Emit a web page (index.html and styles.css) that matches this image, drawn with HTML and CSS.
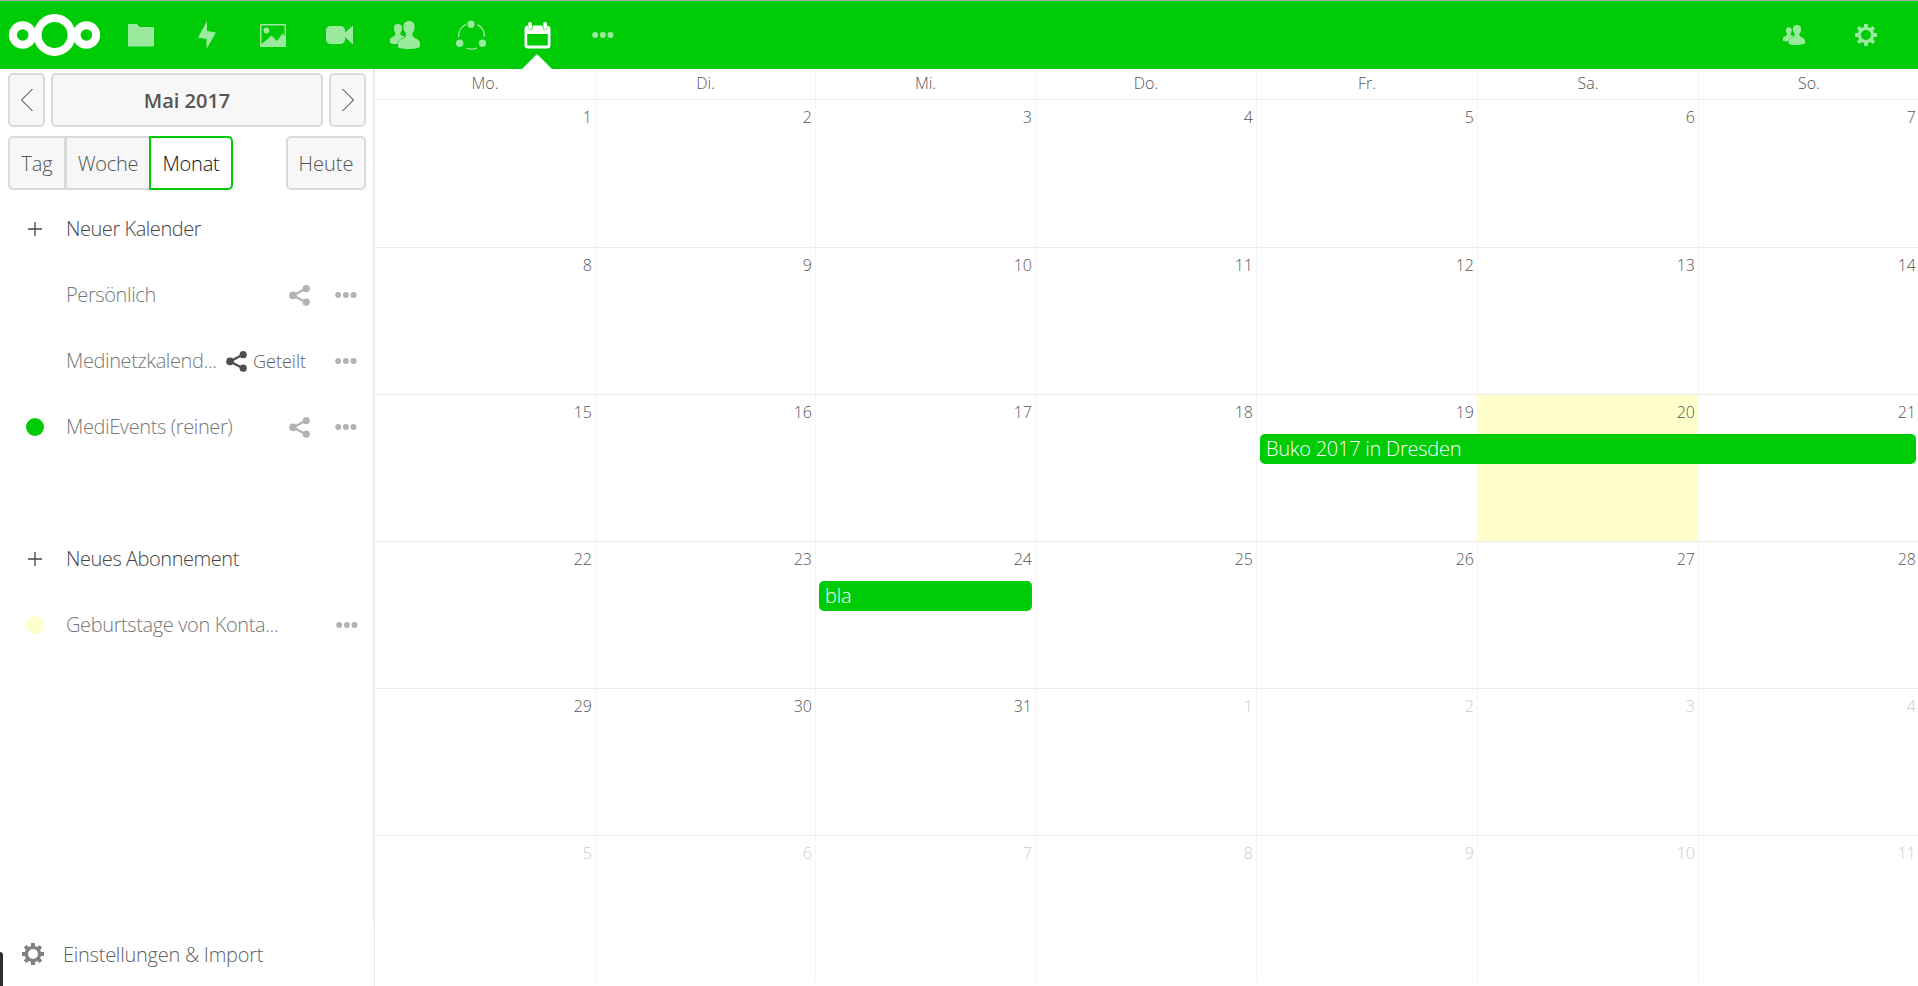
FILE: index.html
```html
<!DOCTYPE html>
<html lang="de">
<head>
<meta charset="utf-8">
<title>Kalender</title>
<link rel="stylesheet" href="styles.css">
</head>
<body>
<svg class="defs" width="0" height="0" aria-hidden="true">
  <symbol id="i-people" viewBox="0 0 30 28">
    <path d="M7.7 3C5 3 3.7 5 3.8 7.500C3.900 9.500 4.600 10.800 5.300 11.700V14C4.500 15.500 0 16 0 19V22C2 23 5 23 7.500 23C7.500 18 13 17.500 14.500 16L14.500 15C12 14.500 10.700 14.500 10.500 13.500V11.500C11.500 10.500 12 8.500 12 7C12 4.500 10.500 3 7.700 3Z"/>
    <path d="M19.200 0C15.500 0 13.200 2.300 13.300 6C13.400 9 14.500 10.800 15.800 12V15.500C14.500 18.500 8 17 8 23V26.500C13 28.600 25 28.600 30 26V22C29.500 17.800 24 17.500 22.500 15V12C23.800 10.800 24.700 8.500 24.700 5.800C24.700 2 22.500 0 19.200 0Z"/>
  </symbol>
  <symbol id="i-gear" viewBox="0 0 22 22">
    <path fill-rule="evenodd" d="M9 0H13V3L15.300 4L17.500 1.900L20.200 4.600L18.100 6.700L19 9H22V13H19L18.100 15.300L20.200 17.400L17.500 20.100L15.300 18.100L13 19V22H9V19L6.700 18.100L4.500 20.100L1.800 17.400L3.900 15.300L3 13H0V9H3L3.900 6.700L1.800 4.600L4.500 1.900L6.700 4L9 3ZM11 6A5 5 0 1 0 11 16A5 5 0 1 0 11 6Z"/>
  </symbol>
  <symbol id="i-dots" viewBox="0 0 22 6">
    <circle cx="3.200" cy="3" r="3"/><circle cx="10.900" cy="3" r="3"/><circle cx="18.500" cy="3" r="3"/>
  </symbol>
  <symbol id="i-share" viewBox="0 0 21 21">
    <path d="M17 3.500L4 10.400L17 17.300" fill="none" stroke="currentColor" stroke-width="2.300"/>
    <circle cx="17.200" cy="3.700" r="3.600"/><circle cx="4" cy="10.400" r="3.800"/><circle cx="17.200" cy="17.200" r="3.600"/>
  </symbol>
  <symbol id="i-plus" viewBox="0 0 14 14">
    <path d="M7 0V14M0 7H14" fill="none" stroke="currentColor" stroke-width="1.300"/>
  </symbol>
</svg>

<header class="topbar">
  <svg class="logo" width="92" height="44" viewBox="0 0 92 44">
    <circle cx="46.600" cy="22" r="17"/>
    <circle cx="14.700" cy="22" r="9.800"/>
    <circle cx="78.400" cy="22" r="9.800"/>
  </svg>
  <nav class="apps">
    <a class="app"><svg width="26" height="24" viewBox="0 0 26 24"><path d="M1 1H9L11.500 4H25Q26 4 26 5V22Q26 23.500 24.500 23.500H1.500Q0 23.500 0 22V2Q0 1 1 1Z"/></svg></a>
    <a class="app"><svg width="20" height="28" viewBox="0 0 20 28"><path d="M10 0L1 16.500L9.500 18V28L19 11.500L10 10Z"/></svg></a>
    <a class="app"><svg width="26" height="23" viewBox="0 0 26 23"><path fill-rule="evenodd" d="M0.500 0H25.500L26 0.500V22.500L25.500 23H0.500L0 22.500V0.500ZM1.500 1.500V20L7 15.500L11.500 11.500L17 17L22.500 9.500L24.500 12V1.500Z"/><circle cx="6.400" cy="6.500" r="2.900"/></svg></a>
    <a class="app"><svg width="27" height="20" viewBox="0 0 27 20"><rect x="0" y="1" width="19" height="18" rx="4.500"/><path d="M27 0.500V19.500L19 12V7.500Z"/></svg></a>
    <a class="app"><svg width="30" height="28"><use href="#i-people"/></svg></a>
    <a class="app"><svg width="31" height="31" viewBox="0 0 31 31"><g fill="none" stroke="currentColor" stroke-width="1.300"><path d="M2.600 17A13 13 0 0 1 10 4.300"/><path d="M21.500 4.600A13 13 0 0 1 28.400 17"/><path d="M21 28A14 14 0 0 1 10 28"/></g><circle cx="15" cy="4.300" r="3.700"/><circle cx="3.700" cy="23.200" r="3.700"/><circle cx="26.500" cy="23.200" r="3.700"/></svg></a>
    <a class="app active"><svg width="27" height="28" viewBox="0 0 27 28"><path fill-rule="evenodd" d="M3.500 4.500H4V6.500Q4.200 9 6.300 9Q8.500 9 8.700 6.500V4.500H18.500V6.500Q18.700 9 21 9Q23.200 9 23.300 6.500V4.500Q26.500 5 26.500 8V24Q26.500 27.500 23 27.500H4Q0.500 27.500 0.500 24V8Q0.500 5 3.500 4.500ZM3.200 13V24.500H23.800V13Z"/><rect x="4.300" y="1" width="3.600" height="7.500" rx="1.600"/><rect x="19.300" y="1" width="3.600" height="7.500" rx="1.600"/></svg></a>
    <a class="app"><svg width="22" height="6"><use href="#i-dots"/></svg></a>
  </nav>
  <div class="tools">
    <a><svg width="22" height="20" viewBox="0 0 30 28" preserveAspectRatio="none"><use href="#i-people"/></svg></a>
    <a><svg width="22" height="22"><use href="#i-gear"/></svg></a>
  </div>
</header>

<div class="content">
  <aside class="sidebar">
    <div class="pager">
      <button class="btn step"><svg width="14" height="24" viewBox="0 0 14 24"><path d="M12.500 1L1.500 12L12.500 23"/></svg></button>
      <button class="btn month">Mai 2017</button>
      <button class="btn step"><svg width="14" height="24" viewBox="0 0 14 24"><path d="M1.500 1L12.500 12L1.500 23"/></svg></button>
    </div>
    <div class="views">
      <button class="btn tag">Tag</button><button class="btn woche">Woche</button><button class="btn monat">Monat</button>
      <button class="btn heute">Heute</button>
    </div>
    <ul class="list">
      <li class="strong"><span class="mark"><svg width="14" height="14"><use href="#i-plus"/></svg></span><span>Neuer Kalender</span></li>
      <li><span class="mark"></span><span class="name">Persönlich</span><svg class="share" width="21" height="21"><use href="#i-share"/></svg><svg class="more" width="22" height="6"><use href="#i-dots"/></svg></li>
      <li><span class="mark"></span><span class="name">Medinetzkalend...</span><span class="shared"><svg width="21" height="21"><use href="#i-share"/></svg>Geteilt</span><svg class="more" width="22" height="6"><use href="#i-dots"/></svg></li>
      <li><span class="mark"><i class="dot green"></i></span><span class="name">MediEvents (reiner)</span><svg class="share" width="21" height="21"><use href="#i-share"/></svg><svg class="more" width="22" height="6"><use href="#i-dots"/></svg></li>
      <li></li>
      <li class="strong"><span class="mark"><svg width="14" height="14"><use href="#i-plus"/></svg></span><span>Neues Abonnement</span></li>
      <li class="sub"><span class="mark"><i class="dot yellow"></i></span><span class="name">Geburtstage von Konta...</span><svg class="more" width="22" height="6"><use href="#i-dots"/></svg></li>
    </ul>
    <div class="settings"><svg width="22" height="22"><use href="#i-gear"/></svg><span>Einstellungen &amp; Import</span></div>
  </aside>

  <main class="calendar">
    <div class="days"><div>Mo.</div><div>Di.</div><div>Mi.</div><div>Do.</div><div>Fr.</div><div>Sa.</div><div>So.</div></div>
    <div class="week first"><div>1</div><div>2</div><div>3</div><div>4</div><div>5</div><div>6</div><div>7</div></div>
    <div class="week"><div>8</div><div>9</div><div>10</div><div>11</div><div>12</div><div>13</div><div>14</div></div>
    <div class="week"><div>15</div><div>16</div><div>17</div><div>18</div><div>19</div><div class="today">20</div><div>21</div><span class="event buko">Buko 2017 in Dresden</span></div>
    <div class="week"><div>22</div><div>23</div><div>24</div><div>25</div><div>26</div><div>27</div><div>28</div><span class="event bla">bla</span></div>
    <div class="week"><div>29</div><div>30</div><div>31</div><div class="other">1</div><div class="other">2</div><div class="other">3</div><div class="other">4</div></div>
    <div class="week"><div class="other">5</div><div class="other">6</div><div class="other">7</div><div class="other">8</div><div class="other">9</div><div class="other">10</div><div class="other">11</div></div>
  </main>
</div>
<div class="edge"></div>
</body>
</html>
```
FILE: styles.css
```css
* { box-sizing: border-box; }
html, body { height: 100%; overflow: hidden; }
body {
  margin: 0;
  display: flex;
  flex-direction: column;
  background: #fff;
  color: #555;
  font: 300 20px/30px "Open Sans", sans-serif;
}
svg { display: block; fill: currentColor; flex: none; }
.defs { position: absolute; }

.topbar {
  flex: none;
  height: 69px;
  display: flex;
  align-items: center;
  padding: 0 16px 0 8px;
  border-top: 1px solid #b0aab2;
  background: #00cb07;
  color: #fff;
}
.logo { fill: none; stroke: #fff; stroke-width: 8; }
.apps { display: flex; margin-left: 8px; align-self: stretch; }
.app {
  position: relative;
  width: 66px;
  display: flex;
  align-items: center;
  justify-content: center;
}
.app svg, .tools svg { opacity: .6; }
.app.active svg { opacity: 1; }
.app.active::after {
  content: "";
  position: absolute;
  left: 18px;
  bottom: 0;
  border: 15px solid transparent;
  border-top: 0;
  border-bottom-color: #fff;
}
.tools { display: flex; margin-left: auto; }
.tools a { width: 72px; display: flex; align-items: center; justify-content: center; }

.content { flex: 1; min-height: 0; display: flex; }
.sidebar {
  flex: none;
  width: 375px;
  display: flex;
  flex-direction: column;
  background: linear-gradient(#ebebeb, #ebebeb) 373px 0 / 1px 853px no-repeat;
  border-right: 1px solid #ebebeb;
}
.pager { display: flex; gap: 6px; padding: 4px 0 0 8px; }
.views { display: flex; padding: 9px 8px 0; }
.btn {
  height: 54px;
  padding: 2px 0 0;
  border: 2px solid #dadada;
  border-radius: 5px;
  background: #f7f7f7;
  color: #555;
  font: inherit;
  display: flex;
  align-items: center;
  justify-content: center;
}
.step { width: 37px; padding: 0; }
.step path { fill: none; stroke: #222; stroke-width: 1; }
.month { width: 272px; font-weight: 600; }
.tag { width: 57px; border-radius: 5px 0 0 5px; border-right-width: 1px; }
.woche { width: 84px; border-radius: 0; border-right: 0; letter-spacing: -.3px; }
.monat { width: 84px; border-radius: 0 5px 5px 0; border-color: #00cb07; background: #fff; color: #111; letter-spacing: -.2px; }
.heute { width: 80px; margin-left: 53px; }

.list { list-style: none; margin: 6px 0 0; padding: 0; }
.list li {
  height: 66px;
  display: flex;
  align-items: center;
  padding-right: 17px;
  color: #777;
  letter-spacing: -.38px;
}
.list .strong { color: #444; letter-spacing: -.45px; }
.mark { width: 66px; padding-left: 26px; flex: none; }
.mark svg { margin-left: 2px; }
.name { flex: 1; white-space: nowrap; }
.dot { display: block; width: 18px; height: 18px; border-radius: 50%; }
.green { background: #00cb07; }
.yellow { background: #ffffcb; }
.share, .more { color: #b3b3b3; }
.share { margin-right: 25px; }
.shared { display: flex; align-items: center; gap: 6px; margin-right: 29px; font-size: 18px; letter-spacing: 0; color: #606060; }
.shared svg { color: #4d4d4d; }
.sub .more { margin-right: -1px; }

.settings {
  margin-top: auto;
  height: 62px;
  display: flex;
  align-items: center;
  gap: 19px;
  padding-left: 22px;
  color: #606060;
  letter-spacing: -.25px;
}
.settings svg { color: #808080; margin-top: -3px; }

.calendar { flex: 1; min-width: 0; overflow: hidden; font-size: 16px; line-height: 22px; }
.days, .week { display: grid; grid-template-columns: 221px 220px 220px 221px 221px 221px 221px; }
.days { height: 30px; text-align: center; }
.days div { border-right: 1px solid #f5f5f5; padding-top: 3px; }
.week { height: 147px; border-top: 1px solid #ebebeb; grid-template-rows: 39px 30px 1fr; }
.week.first { height: 148px; }
.week div { grid-row: 1 / -1; border-right: 1px solid #f5f5f5; padding: 6px 3px 0; text-align: right; }
.week div:nth-child(1) { grid-column: 1; }
.week div:nth-child(2) { grid-column: 2; }
.week div:nth-child(3) { grid-column: 3; }
.week div:nth-child(4) { grid-column: 4; }
.week div:nth-child(5) { grid-column: 5; }
.week div:nth-child(6) { grid-column: 6; }
.week div:nth-child(7) { grid-column: 7; }
.week .today { background: #ffffcb; }
.week .other { color: #ccc; }
.event {
  grid-row: 2;
  margin: 0 4px 0 3px;
  padding-left: 6px;
  border-radius: 5px;
  background: #00cb07;
  color: #fff;
  font-size: 20px;
  line-height: 29px;
  letter-spacing: -.25px;
}
.buko { grid-column: 5 / 8; }
.bla { grid-column: 3; }

/* Dock handle peeking in over the lower left corner */
.edge {
  position: absolute;
  left: 0;
  bottom: 0;
  width: 3px;
  height: 34px;
  border-radius: 0 3px 0 0;
  background: #2e3133;
}
```
